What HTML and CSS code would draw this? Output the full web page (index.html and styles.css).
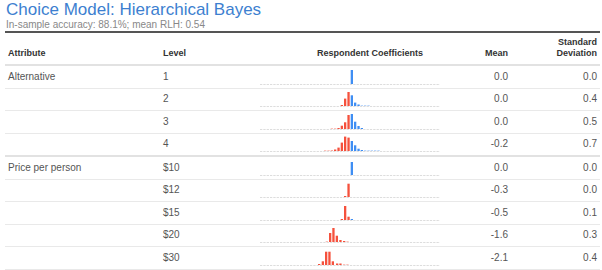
FILE: index.html
```html
<!DOCTYPE html>
<html>
<head>
<meta charset="utf-8">
<link rel="stylesheet" href="styles.css">
</head>
<body>
<div class="page">
  <div class="heading">
    <h1 class="title">Choice Model: Hierarchical Bayes</h1>
    <div class="subtitle">In-sample accuracy: 88.1%; mean RLH: 0.54</div>
  </div>
  <div class="grid">
    <div class="row head">
      <div class="c attr">Attribute</div>
      <div class="c lvl">Level</div>
      <div class="c coef">Respondent Coefficients</div>
      <div class="c num">Mean</div>
      <div class="c num">Standard<br>Deviation</div>
    </div>

    <div class="row">
      <div class="c attr">Alternative</div>
      <div class="c lvl">1</div>
      <div class="c hist"><svg viewBox="0 0 180 18" width="180" height="18"><line class="base" x1="0" y1="16.5" x2="180" y2="16.5"/>
        <rect class="p" x="90.7" y="2" width="2.3" height="14"/>
      </svg></div>
      <div class="c num">0.0</div>
      <div class="c num">0.0</div>
    </div>

    <div class="row">
      <div class="c attr"></div>
      <div class="c lvl">2</div>
      <div class="c hist"><svg viewBox="0 0 180 18" width="180" height="18"><line class="base" x1="0" y1="16.5" x2="180" y2="16.5"/>
        <rect class="n" x="80.7" y="15" width="2.3" height="1"/>
        <rect class="n" x="84" y="8.6" width="2.3" height="7.4"/>
        <rect class="n" x="87.4" y="2" width="2.3" height="14"/>
        <rect class="p" x="90.7" y="5.3" width="2.3" height="10.7"/>
        <rect class="p" x="94" y="12.6" width="2.3" height="3.4"/>
        <rect class="p" x="97.4" y="14.5" width="2.3" height="1.5"/>
        <rect class="p f" x="100.7" y="15.3" width="2.3" height="0.7"/>
        <rect class="p f" x="104" y="15.3" width="2.3" height="0.7"/>
        <rect class="p f" x="107.4" y="15.3" width="2.3" height="0.7"/>
      </svg></div>
      <div class="c num">0.0</div>
      <div class="c num">0.4</div>
    </div>

    <div class="row">
      <div class="c attr"></div>
      <div class="c lvl">3</div>
      <div class="c hist"><svg viewBox="0 0 180 18" width="180" height="18"><line class="base" x1="0" y1="16.5" x2="180" y2="16.5"/>
        <rect class="n f" x="70.7" y="15.3" width="2.3" height="0.7"/>
        <rect class="n f" x="74" y="15.3" width="2.3" height="0.7"/>
        <rect class="n" x="77.4" y="15" width="2.3" height="1"/>
        <rect class="n" x="80.7" y="12.7" width="2.3" height="3.3"/>
        <rect class="n" x="84" y="9.3" width="2.3" height="6.7"/>
        <rect class="n" x="87.4" y="2" width="2.3" height="14"/>
        <rect class="p" x="90.7" y="1" width="2.3" height="15"/>
        <rect class="p" x="94" y="8.7" width="2.3" height="7.3"/>
        <rect class="p" x="97.4" y="13" width="2.3" height="3"/>
        <rect class="p" x="100.7" y="15" width="2.3" height="1"/>
      </svg></div>
      <div class="c num">0.0</div>
      <div class="c num">0.5</div>
    </div>

    <div class="row group-end">
      <div class="c attr"></div>
      <div class="c lvl">4</div>
      <div class="c hist"><svg viewBox="0 0 180 18" width="180" height="18"><line class="base" x1="0" y1="16.5" x2="180" y2="16.5"/>
        <rect class="n f" x="64" y="15.3" width="2.3" height="0.7"/>
        <rect class="n f" x="67.4" y="15.3" width="2.3" height="0.7"/>
        <rect class="n f" x="70.7" y="15" width="2.3" height="1"/>
        <rect class="n" x="74" y="14.5" width="2.3" height="1.5"/>
        <rect class="n" x="77.4" y="12.6" width="2.3" height="3.4"/>
        <rect class="n" x="80.7" y="7.6" width="2.3" height="8.4"/>
        <rect class="n" x="84" y="1.6" width="2.3" height="14.4"/>
        <rect class="n" x="87.4" y="2.6" width="2.3" height="13.4"/>
        <rect class="p" x="90.7" y="6" width="2.3" height="10"/>
        <rect class="p" x="94" y="10.3" width="2.3" height="5.7"/>
        <rect class="p" x="97.4" y="13.7" width="2.3" height="2.3"/>
        <rect class="p" x="100.7" y="15" width="2.3" height="1"/>
        <rect class="p f" x="104" y="15.3" width="2.3" height="0.7"/>
        <rect class="p f" x="107.4" y="15.3" width="2.3" height="0.7"/>
        <rect class="p f" x="110.7" y="15.3" width="2.3" height="0.7"/>
        <rect class="p f" x="114" y="15.3" width="2.3" height="0.7"/>
        <rect class="p f" x="117.4" y="15.3" width="2.3" height="0.7"/>
      </svg></div>
      <div class="c num">-0.2</div>
      <div class="c num">0.7</div>
    </div>

    <div class="row">
      <div class="c attr">Price per person</div>
      <div class="c lvl">$10</div>
      <div class="c hist"><svg viewBox="0 0 180 18" width="180" height="18"><line class="base" x1="0" y1="16.5" x2="180" y2="16.5"/>
        <rect class="p" x="90.7" y="3" width="2.3" height="13"/>
      </svg></div>
      <div class="c num">0.0</div>
      <div class="c num">0.0</div>
    </div>

    <div class="row">
      <div class="c attr"></div>
      <div class="c lvl">$12</div>
      <div class="c hist"><svg viewBox="0 0 180 18" width="180" height="18"><line class="base" x1="0" y1="16.5" x2="180" y2="16.5"/>
        <rect class="n" x="84" y="15" width="2.3" height="1"/>
        <rect class="n" x="87.4" y="2.7" width="2.3" height="13.3"/>
      </svg></div>
      <div class="c num">-0.3</div>
      <div class="c num">0.0</div>
    </div>

    <div class="row">
      <div class="c attr"></div>
      <div class="c lvl">$15</div>
      <div class="c hist"><svg viewBox="0 0 180 18" width="180" height="18"><line class="base" x1="0" y1="16.5" x2="180" y2="16.5"/>
        <rect class="n" x="80.7" y="15" width="2.3" height="1"/>
        <rect class="n" x="84" y="2" width="2.3" height="14"/>
        <rect class="n" x="87.4" y="12.7" width="2.3" height="3.3"/>
        <rect class="p" x="90.7" y="15" width="2.3" height="1"/>
      </svg></div>
      <div class="c num">-0.5</div>
      <div class="c num">0.1</div>
    </div>

    <div class="row">
      <div class="c attr"></div>
      <div class="c lvl">$20</div>
      <div class="c hist"><svg viewBox="0 0 180 18" width="180" height="18"><line class="base" x1="0" y1="16.5" x2="180" y2="16.5"/>
        <rect class="n f" x="65.7" y="15.3" width="2.3" height="0.7"/>
        <rect class="n" x="69" y="7" width="2.3" height="9"/>
        <rect class="n" x="72.3" y="2" width="2.3" height="14"/>
        <rect class="n" x="75.7" y="9.7" width="2.3" height="6.3"/>
        <rect class="n" x="79.3" y="14" width="2.3" height="2"/>
        <rect class="n" x="83" y="15" width="2.3" height="1"/>
        <rect class="n f" x="86.4" y="15.3" width="2.3" height="0.7"/>
      </svg></div>
      <div class="c num">-1.6</div>
      <div class="c num">0.3</div>
    </div>

    <div class="row">
      <div class="c attr"></div>
      <div class="c lvl">$30</div>
      <div class="c hist"><svg viewBox="0 0 180 18" width="180" height="18"><line class="base" x1="0" y1="16.5" x2="180" y2="16.5"/>
        <rect class="n" x="58" y="15" width="2.3" height="1"/>
        <rect class="n" x="61.7" y="12.3" width="2.3" height="3.7"/>
        <rect class="n" x="65" y="2.7" width="2.3" height="13.3"/>
        <rect class="n" x="68.3" y="2.7" width="2.3" height="13.3"/>
        <rect class="n" x="71.7" y="12.3" width="2.3" height="3.7"/>
        <rect class="n" x="76" y="14.5" width="2.3" height="1.5"/>
        <rect class="n" x="79.3" y="14.5" width="2.3" height="1.5"/>
        <rect class="n f" x="83" y="15.3" width="2.3" height="0.7"/>
        <rect class="n f" x="86.3" y="15.3" width="2.3" height="0.7"/>
      </svg></div>
      <div class="c num">-2.1</div>
      <div class="c num">0.4</div>
    </div>
  </div>
</div>
</body>
</html>
```
FILE: styles.css
```css
* { box-sizing: border-box; }

body {
  margin: 0;
  background: #ffffff;
  font-family: "Liberation Sans", Arial, sans-serif;
  color: #555555;
}

.page {
  padding: 0 2px 0 5px;
}

.heading {
  border-bottom: 2px solid #555555;
  padding-left: 1px;
}

.title {
  margin: 0;
  font-size: 17px;
  line-height: 19px;
  font-weight: normal;
  color: #3d7fd0;
}

.subtitle {
  font-size: 10px;
  line-height: 12px;
  color: #888888;
}

.row {
  display: grid;
  grid-template-columns: 155px 95px 230px 26px 89px;
  height: 22.5px;
  border-bottom: 1px solid #e9e9e9;
  font-size: 10px;
  line-height: 12px;
}

.row.head {
  height: 33px;
  border-bottom: 2px solid #e2e2e2;
  font-size: 9px;
  line-height: 11px;
  font-weight: bold;
  color: #333333;
  align-items: end;
  padding-bottom: 5px;
}

.row.group-end {
  height: 23.5px;
  border-bottom: 2px solid #e2e2e2;
}

.c {
  align-self: center;
  white-space: nowrap;
}

.row.head .c {
  align-self: end;
}

.attr, .lvl {
  padding-left: 3px;
}

.coef {
  text-align: center;
}

.num {
  text-align: right;
  padding-right: 3px;
}

.hist {
  align-self: end;
  padding: 0 0 2px 5px;
}

.hist svg {
  display: block;
}

.base {
  stroke: #dddddd;
  stroke-width: 1;
  stroke-dasharray: 2.3 1.03;
}

.n { fill: #f5513d; }
.p { fill: #3f8ef3; }
.f { opacity: 0.5; }
```
